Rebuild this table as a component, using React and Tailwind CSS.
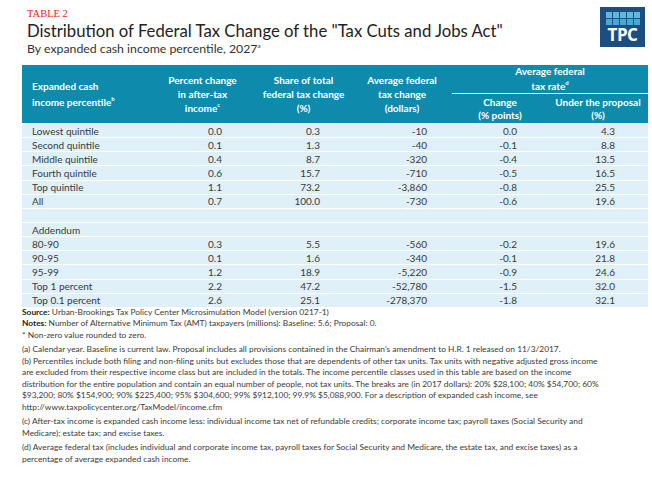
const quintiles = [
  ['Lowest quintile', '0.0', '0.3', '-10', '0.0', '4.3'],
  ['Second quintile', '0.1', '1.3', '-40', '-0.1', '8.8'],
  ['Middle quintile', '0.4', '8.7', '-320', '-0.4', '13.5'],
  ['Fourth quintile', '0.6', '15.7', '-710', '-0.5', '16.5'],
  ['Top quintile', '1.1', '73.2', '-3,860', '-0.8', '25.5'],
  ['All', '0.7', '100.0', '-730', '-0.6', '19.6'],
  ['', '', '', '', '', ''],
  ['Addendum', '', '', '', '', ''],
  ['80-90', '0.3', '5.5', '-560', '-0.2', '19.6'],
  ['90-95', '0.1', '1.6', '-340', '-0.1', '21.8'],
  ['95-99', '1.2', '18.9', '-5,220', '-0.9', '24.6'],
  ['Top 1 percent', '2.2', '47.2', '-52,780', '-1.5', '32.0'],
  ['Top 0.1 percent', '2.6', '25.1', '-278,370', '-1.8', '32.1'],
];

const cols = 'grid grid-cols-[128px_105px_97px_100px_96px_100px]';

const Logo = () => (
  <div className="w-[45px] h-[40px] bg-[#1c4f7f] flex flex-col items-center pt-[5px]">
    <div className="grid grid-cols-5 gap-[1px]">
      {Array.from({ length: 10 }).map((_, i) => (
        <div key={i} className={`w-[6px] h-[6px] ${i < 5 ? 'bg-[#5fb9df]' : 'bg-[#4aa6d2]'}`} />
      ))}
    </div>
    <div className="text-white font-bold text-[17px] leading-[18px] mt-[1px] tracking-[-0.5px] font-['Open_Sans',sans-serif]">
      TPC
    </div>
  </div>
);

const Row = ({ r }) => (
  <div className={`${cols} h-[13.15px] bg-[#dff0f8] items-center text-[10px] leading-none text-[#3a3a3a]`}>
    <div className="pl-[10px] whitespace-nowrap">{r[0]}</div>
    <div className="text-right pr-[33px]">{r[1]}</div>
    <div className="text-right pr-[32px]">{r[2]}</div>
    <div className="text-right pr-[25px]">{r[3]}</div>
    <div className="text-right pr-[31px]">{r[4]}</div>
    <div className="text-right pr-[33px]">{r[5]}</div>
  </div>
);

export default function App() {
  return (
    <div className="w-[652px] h-[478px] bg-white overflow-hidden font-['Lato',sans-serif]">
      {/* Title block */}
      <div className="flex justify-between">
        <div className="pl-[27px] pt-[8px]">
          <div className="font-['Liberation_Serif',serif] text-[#e2231a] text-[10.5px] leading-[12px]">TABLE 2</div>
          <div className="text-[#222] text-[16.7px] leading-[20px] mt-[1px] whitespace-nowrap">
            Distribution of Federal Tax Change of the "Tax Cuts and Jobs Act"
          </div>
          <div className="text-[#333] text-[12.3px] leading-[16px] whitespace-nowrap">
            By expanded cash income percentile, 2027<sup className="text-[6px] -top-[5px]">a</sup>
          </div>
        </div>
        <div className="pr-[7px] pt-[7px]">
          <Logo />
        </div>
      </div>

      {/* Table */}
      <div className="ml-[22px] w-[626px] mt-[8px]">
        <div className={`${cols} grid-rows-[29px_29px] h-[58px] bg-[#0e8aad] text-white font-bold text-[10px] leading-[14px]`}>
          <div className="row-span-2 flex flex-col justify-center pl-[10px] leading-[16px]">
            <div>Expanded cash</div>
            <div>income percentile<sup className="text-[6px] -top-[5px]">b</sup></div>
          </div>
          <div className="row-span-2 flex flex-col justify-center items-center text-center">
            <div>Percent change</div>
            <div>in after-tax</div>
            <div>income<sup className="text-[6px] -top-[5px]">c</sup></div>
          </div>
          <div className="row-span-2 flex flex-col justify-center items-center text-center">
            <div>Share of total</div>
            <div>federal tax change</div>
            <div>(%)</div>
          </div>
          <div className="row-span-2 flex flex-col justify-center items-center text-center">
            <div>Average federal</div>
            <div>tax change</div>
            <div>(dollars)</div>
          </div>
          <div className="col-span-2 flex flex-col justify-center items-center text-center border-b border-white leading-[15px]">
            <div>Average federal</div>
            <div>tax rate<sup className="text-[6px] -top-[5px]">d</sup></div>
          </div>
          <div className="flex flex-col justify-center items-center text-center leading-[13px]">
            <div>Change</div>
            <div>(% points)</div>
          </div>
          <div className="flex flex-col justify-center items-center text-center leading-[13px]">
            <div>Under the proposal</div>
            <div>(%)</div>
          </div>
        </div>
        <div className="flex flex-col gap-[1px] pt-[1px]">
          {quintiles.map((r, i) => (
            <Row key={i} r={r} />
          ))}
        </div>
      </div>

      {/* Notes */}
      <div className="ml-[22px] mt-[0px] text-[8.4px] leading-[11.5px] text-[#3a3a3a] whitespace-nowrap">
        <div><span className="font-bold text-[#222]">Source:</span> Urban-Brookings Tax Policy Center Microsimulation Model (version 0217-1)</div>
        <div><span className="font-bold text-[#222]">Notes:</span> Number of Alternative Minimum Tax (AMT) taxpayers (millions): Baseline: 5.6; Proposal: 0.</div>
        <div>* Non-zero value rounded to zero.</div>
        <div className="mt-[3px]">(a) Calendar year. Baseline is current law. Proposal includes all provisions contained in the Chairman's amendment to H.R. 1 released on 11/3/2017.</div>
        <div>(b) Percentiles include both filing and non-filing units but excludes those that are dependents of other tax units. Tax units with negative adjusted gross income</div>
        <div>are excluded from their respective income class but are included in the totals. The income percentile classes used in this table are based on the income</div>
        <div>distribution for the entire population and contain an equal number of people, not tax units. The breaks are (in 2017 dollars): 20% $28,100; 40% $54,700; 60%</div>
        <div>$93,200; 80% $154,900; 90% $225,400; 95% $304,600; 99% $912,100; 99.9% $5,088,900. For a description of expanded cash income, see</div>
        <div>http://www.taxpolicycenter.org/TaxModel/income.cfm</div>
        <div className="mt-[3px]">(c) After-tax income is expanded cash income less: individual income tax net of refundable credits; corporate income tax; payroll taxes (Social Security and</div>
        <div>Medicare); estate tax; and excise taxes.</div>
        <div className="mt-[3px]">(d) Average federal tax (includes individual and corporate income tax, payroll taxes for Social Security and Medicare, the estate tax, and excise taxes) as a</div>
        <div>percentage of average expanded cash income.</div>
      </div>
    </div>
  );
}
